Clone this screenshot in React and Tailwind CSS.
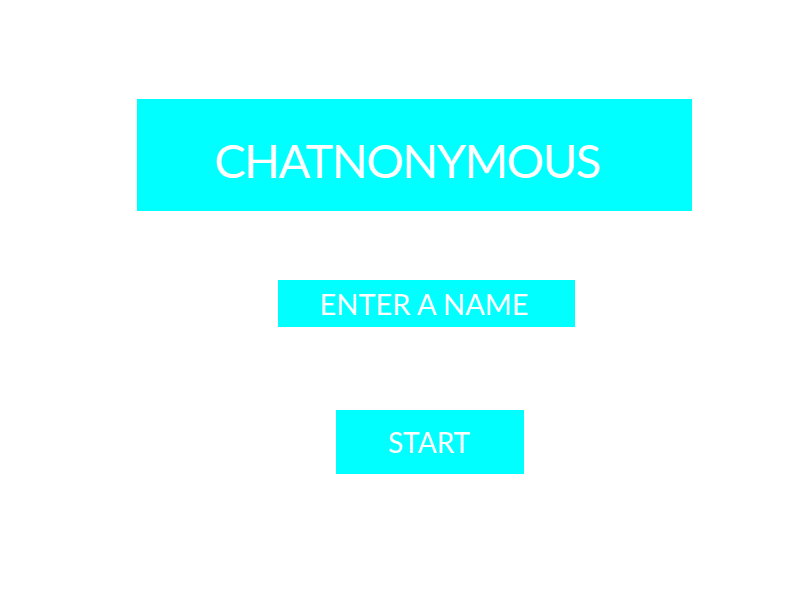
export default function App() {
  return (
    <div className="w-[800px] h-[600px] bg-white overflow-hidden" style={{ fontFamily: 'Lato, "Open Sans", sans-serif' }}>
      <div className="ml-[137px] mt-[99px] w-[555px] h-[112px] bg-[#00ffff] flex items-center justify-center pt-[10px] pr-[15px]">
        <span className="text-white text-[47px] leading-none tracking-[-1.5px]">CHATNONYMOUS</span>
      </div>
      <div className="ml-[278px] mt-[69px] w-[297px] h-[47px] bg-[#00ffff] flex items-center justify-center pr-[5px]">
        <span className="text-white text-[29px] leading-none">ENTER A NAME</span>
      </div>
      <div className="ml-[336px] mt-[83px] w-[188px] h-[64px] bg-[#00ffff] flex items-center justify-center pr-[2px]">
        <span className="text-white text-[28px] leading-none">START</span>
      </div>
    </div>
  );
}
